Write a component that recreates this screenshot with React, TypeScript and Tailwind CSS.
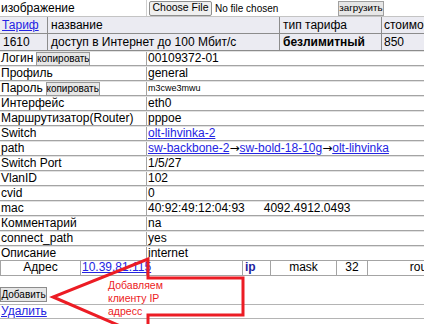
const link = "text-[#2424e2] underline";

function Row({ label, children }: { label: React.ReactNode; children?: React.ReactNode }) {
  return (
    <div className="flex h-[15px] border-b border-t border-b-[#a4a4a4] border-t-[#e2e2e2] leading-[13px]">
      <div className="w-[147px] shrink-0 border-r border-[#a4a4a4] pl-[1px] flex items-center whitespace-nowrap">
        {label}
      </div>
      <div className="flex-1 pl-[1px] flex items-center whitespace-nowrap">{children}</div>
    </div>
  );
}

function CopyButton() {
  return (
    <span className="ml-[3px] h-[14px] w-[54px] flex items-center justify-center border border-[#9a9a9a] bg-[#e6e6e6] text-[10px] leading-[12px]">
      копировать
    </span>
  );
}

function Arrow() {
  return <span className="font-['DejaVu_Sans',sans-serif] text-[12px] leading-[13px]">→</span>;
}

export default function App() {
  return (
    <div className="relative w-[424px] h-[324px] overflow-hidden bg-white text-black text-[12px] font-['Liberation_Sans',Arial,sans-serif]">
      {/* upload row */}
      <div className="flex h-[17px] border-b border-[#c4c4c4]">
        <div className="w-[147px] shrink-0 border-r border-[#cfcfcf] pl-[1px] leading-[16px]">изображение</div>
        <div className="w-[190px] shrink-0 flex items-center pl-[2px]">
          <span className="h-[15px] w-[63px] flex items-center justify-center border border-[#8f8f8f] rounded-[2px] bg-[#efefef] text-[10.5px]">
            Choose File
          </span>
          <span className="ml-[3px] text-[10px]">No file chosen</span>
        </div>
        <div className="flex items-center pl-[1px]">
          <span className="h-[15px] w-[46px] flex items-center justify-center border border-[#a0a0a0] bg-[#e6e6e6] text-[9.8px]">
            загрузить
          </span>
        </div>
      </div>

      {/* tariff table */}
      <div className="grid grid-cols-[48px_232px_102px_1fr] bg-[#ebebf2] leading-[16px] whitespace-nowrap">
        <div className="h-[17px] border-r border-b border-[#8c8c8c] pl-[2px]">
          <span className={link}>Тариф</span>
        </div>
        <div className="h-[17px] border-r border-b border-[#8c8c8c] pl-[3px]">название</div>
        <div className="h-[17px] border-r border-b border-[#8c8c8c] pl-[3px]">тип тарифа</div>
        <div className="h-[17px] border-b border-[#8c8c8c] pl-[2px] overflow-hidden">стоимость</div>
        <div className="h-[17px] border-r border-b border-[#8c8c8c] pl-[3px]">1610</div>
        <div className="h-[17px] border-r border-b border-[#8c8c8c] pl-[3px]">доступ в Интернет до 100 Мбит/с</div>
        <div className="h-[17px] border-r border-b border-[#8c8c8c] pl-[3px] font-bold">безлимитный</div>
        <div className="h-[17px] border-b border-[#8c8c8c] pl-[2px]">850</div>
      </div>

      {/* client details */}
      <Row label={<><span>Логин</span><CopyButton /></>}>00109372-01</Row>
      <Row label="Профиль">general</Row>
      <Row label={<><span>Пароль</span><CopyButton /></>}>
        <span className="text-[9px]">m3cwe3mwu</span>
      </Row>
      <Row label="Интерфейс">eth0</Row>
      <Row label="Маршрутизатор(Router)">pppoe</Row>
      <Row label="Switch">
        <span className={link}>olt-lihvinka-2</span>
      </Row>
      <Row label="path">
        <span className={link}>sw-backbone-2</span>
        <Arrow />
        <span className={link}>sw-bold-18-10g</span>
        <Arrow />
        <span className={link}>olt-lihvinka</span>
      </Row>
      <Row label="Switch Port">1/5/27</Row>
      <Row label="VlanID">102</Row>
      <Row label="cvid">0</Row>
      <Row label="mac">
        <span>40:92:49:12:04:93</span>
        <span className="ml-[19px]">4092.4912.0493</span>
      </Row>
      <Row label="Комментарий">na</Row>
      <Row label="connect_path">yes</Row>
      <Row label="Описание">internet</Row>

      {/* address sub-table */}
      <div className="flex h-[15px] border-b border-[#a4a4a4] leading-[13px] whitespace-nowrap">
        <div className="w-[81px] shrink-0 border-x border-[#a4a4a4] text-center">Адрес</div>
        <div className="w-[66px] shrink-0 border-r border-[#a4a4a4] pl-[1px]">
          <span className={link}>10.39.81.115</span>
        </div>
        <div className="w-[96px] shrink-0 border-r border-[#a4a4a4]" />
        <div className="w-[28px] shrink-0 border-r border-[#a4a4a4] pl-[2px] font-bold text-[#1d1d9e]">ip</div>
        <div className="w-[66px] shrink-0 border-r border-[#a4a4a4] text-center">mask</div>
        <div className="w-[31px] shrink-0 border-r border-[#a4a4a4] text-center">32</div>
        <div className="w-[115px] shrink-0 text-center">router</div>
      </div>

      <div className="h-[29px] border-b border-[#b4b4b4] flex items-end pb-[2px]">
        <span className="h-[15px] w-[47px] flex items-center justify-center border border-[#8c8c8c] bg-[#e6e6e6] text-[10px]">
          Добавить
        </span>
      </div>
      <div className="h-[14px] border-b border-[#b4b4b4] pl-[1px] leading-[13px]">
        <span className={link}>Удалить</span>
      </div>

      {/* annotation overlay */}
      <svg className="absolute inset-0 pointer-events-none" width="424" height="324" viewBox="0 0 424 324">
        <polygon
          points="148,338 53,297 148,259 148,278 243,278 243,315 148,315"
          fill="none"
          stroke="#ec1c24"
          strokeWidth="3"
          strokeLinejoin="miter"
        />
      </svg>
      <div className="absolute left-[108px] top-[279px] text-[10.5px] leading-[13px] text-[#ec1c24] pointer-events-none">
        <div>Добавляем</div>
        <div>клиенту IP</div>
        <div>адресс</div>
      </div>
    </div>
  );
}
